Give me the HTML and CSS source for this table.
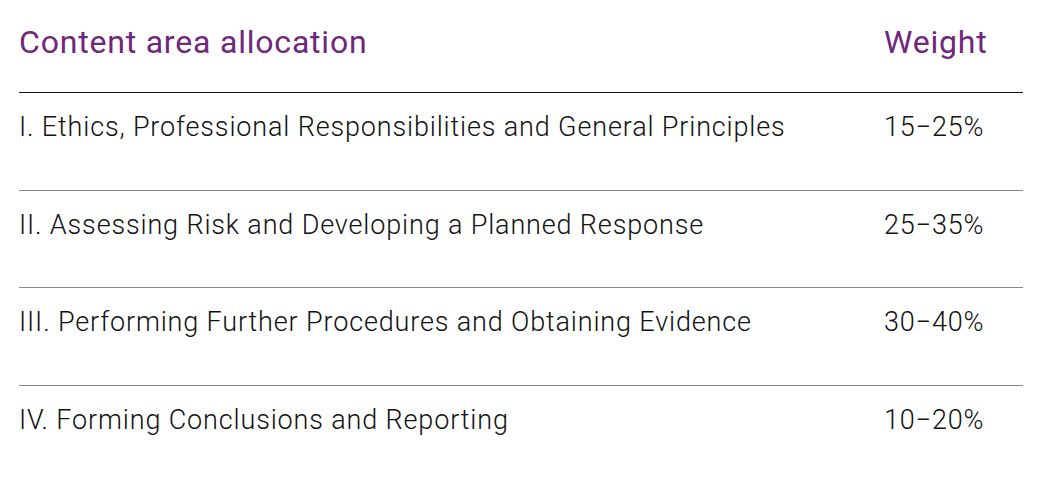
FILE: index.html
```html
<!DOCTYPE html>
<html>
<head>
<meta charset="utf-8">
<link rel="stylesheet" href="styles.css">
</head>
<body>
<div class="alloc">
  <div class="row head">
    <div class="area">Content area allocation</div>
    <div class="weight">Weight</div>
  </div>
  <div class="row">
    <div class="area">I. Ethics, Professional Responsibilities and General Principles</div>
    <div class="weight">15−25%</div>
  </div>
  <div class="row">
    <div class="area">II. Assessing Risk and Developing a Planned Response</div>
    <div class="weight">25−35%</div>
  </div>
  <div class="row">
    <div class="area">III. Performing Further Procedures and Obtaining Evidence</div>
    <div class="weight">30−40%</div>
  </div>
  <div class="row last">
    <div class="area">IV. Forming Conclusions and Reporting</div>
    <div class="weight">10−20%</div>
  </div>
</div>
</body>
</html>
```
FILE: styles.css
```css
html, body {
  margin: 0;
  padding: 0;
  background: #ffffff;
}
body {
  font-family: Roboto, "Liberation Sans", sans-serif;
  color: #111111;
}
.alloc {
  width: 1004px;
  margin-left: 19px;
  display: flex;
  flex-direction: column;
}
.row {
  display: grid;
  grid-template-columns: 865px 1fr;
  font-size: 27px;
  font-weight: 300;
  letter-spacing: 0.85px;
  line-height: 36px;
  padding: 16px 0 44.5px;
  border-bottom: 1.5px solid #8a8a8a;
}
.row.head {
  font-size: 32px;
  font-weight: 400;
  color: #70267c;
  letter-spacing: 0.8px;
  line-height: 40px;
  padding: 22px 0 30px;
  border-bottom: 1.5px solid #111111;
}
.row.last {
  border-bottom: none;
}
```
